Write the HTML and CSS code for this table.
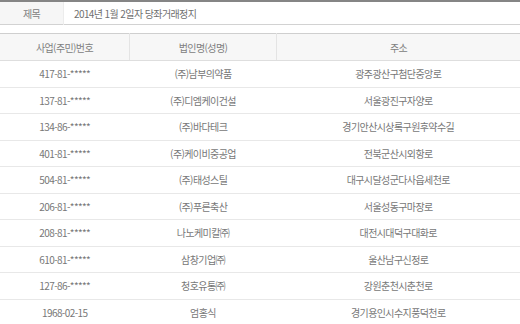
FILE: index.html
```html
<!DOCTYPE html>
<html lang="ko">
<head>
<meta charset="utf-8">
<link rel="stylesheet" href="styles.css">
</head>
<body>
<table class="title-table">
  <tr>
    <th class="title-label">제목</th>
    <td class="title-value">2014년 1월 2일자 당좌거래정지</td>
  </tr>
</table>
<table class="list">
  <thead>
    <tr>
      <th class="c1">사업(주민)번호</th>
      <th class="c2">법인명(성명)</th>
      <th class="c3">주소</th>
    </tr>
  </thead>
  <tbody>
    <tr><td>417-81-*****</td><td>(주)남부의약품</td><td>광주광산구첨단중앙로</td></tr>
    <tr><td>137-81-*****</td><td>(주)디엠케이건설</td><td>서울광진구자양로</td></tr>
    <tr><td>134-86-*****</td><td>(주)바다테크</td><td>경기안산시상록구원후약수길</td></tr>
    <tr><td>401-81-*****</td><td>(주)케이비중공업</td><td>전북군산시외항로</td></tr>
    <tr><td>504-81-*****</td><td>(주)태성스틸</td><td>대구시달성군다사읍세천로</td></tr>
    <tr><td>206-81-*****</td><td>(주)푸른축산</td><td>서울성동구마장로</td></tr>
    <tr><td>208-81-*****</td><td>나노케미칼㈜</td><td>대전시대덕구대화로</td></tr>
    <tr><td>610-81-*****</td><td>삼창기업㈜</td><td>울산남구신정로</td></tr>
    <tr><td>127-86-*****</td><td>청호유통㈜</td><td>강원춘천시춘천로</td></tr>
    <tr class="last"><td>1968-02-15</td><td>엄홍식</td><td>경기용인시수지풍덕천로</td></tr>
  </tbody>
</table>
</body>
</html>
```
FILE: styles.css
```css
html, body {
  margin: 0;
  padding: 0;
  background: #fff;
}
body {
  font-family: "Noto Sans CJK KR", "Noto Sans", sans-serif;
  font-size: 10px;
  color: #777;
  width: 520px;
  overflow: hidden;
}
table {
  border-collapse: collapse;
  width: 520px;
  table-layout: fixed;
}
.title-table {
  border-top: 2px solid #858585;
  border-bottom: 1px solid #d2d2d2;
}
.title-table th,
.title-table td {
  height: 22px;
  padding: 0;
  font-weight: normal;
  letter-spacing: -0.6px;
}
.title-label {
  width: 63px;
  background: #f6f6f6;
  text-align: center;
  color: #808080;
  border-right: 1px solid #ececec;
}
.title-value {
  padding-left: 10px !important;
  text-align: left;
  color: #707070;
}
.list {
  margin-top: 8px;
  border-top: 1px solid #cfcfcf;
}
.list th {
  height: 26px;
  padding: 0;
  background: #f7f7f7;
  font-weight: normal;
  color: #808080;
  border-bottom: 1px solid #dedede;
  border-left: 1px solid #e4e4e4;
  letter-spacing: -0.6px;
}
.list th.c1 { width: 129px; border-left: none; }
.list th.c2 { width: 146px; }
.list td {
  height: 25.5px;
  padding: 0;
  text-align: center;
  border-bottom: 1px solid #e8e8e8;
  letter-spacing: -0.6px;
}
.list tr.last td {
  border-bottom: 1px solid #cfcfcf;
}
```
